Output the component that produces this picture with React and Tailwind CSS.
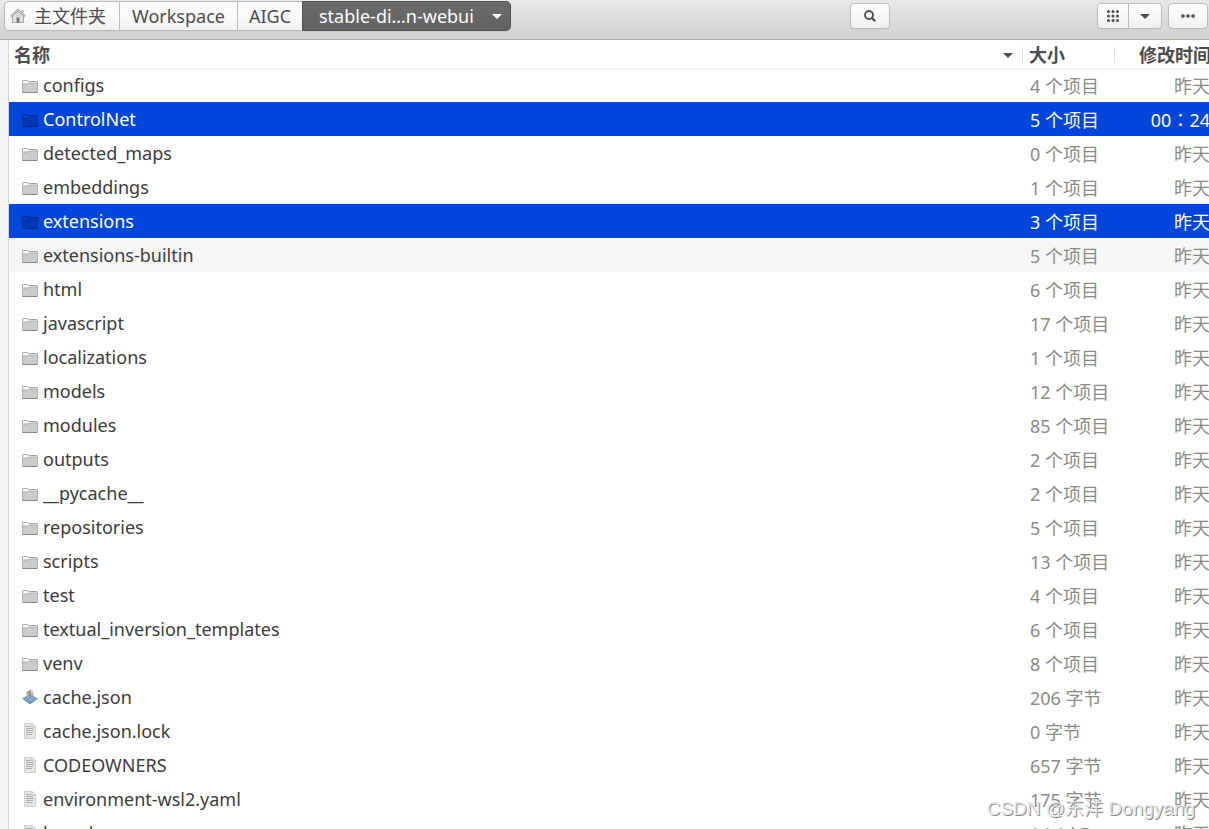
import React from "react";

const files = [
  { name: "configs", size: "4 个项目" },
  { name: "ControlNet", size: "5 个项目", date: "00：24", selected: true },
  { name: "detected_maps", size: "0 个项目" },
  { name: "embeddings", size: "1 个项目" },
  { name: "extensions", size: "3 个项目", selected: true },
  { name: "extensions-builtin", size: "5 个项目", hovered: true },
  { name: "html", size: "6 个项目" },
  { name: "javascript", size: "17 个项目" },
  { name: "localizations", size: "1 个项目" },
  { name: "models", size: "12 个项目" },
  { name: "modules", size: "85 个项目" },
  { name: "outputs", size: "2 个项目" },
  { name: "__pycache__", size: "2 个项目" },
  { name: "repositories", size: "5 个项目" },
  { name: "scripts", size: "13 个项目" },
  { name: "test", size: "4 个项目" },
  { name: "textual_inversion_templates", size: "6 个项目" },
  { name: "venv", size: "8 个项目" },
  { name: "cache.json", size: "206 字节", type: "json" },
  { name: "cache.json.lock", size: "0 字节", type: "text" },
  { name: "CODEOWNERS", size: "657 字节", type: "text" },
  { name: "environment-wsl2.yaml", size: "175 字节", type: "text" },
  { name: "launch.py", size: "14.1 kB", type: "text" },
];

function HomeIcon() {
  return (
    <svg className="w-4 h-4 shrink-0" viewBox="0 0 16 16" fill="none">
      <path d="M2.5 8v6.500h11V8L8 3z" fill="#e2e2e2" stroke="#a8a8a8" />
      <path d="M11.500 2h2v4l-2-2z" fill="#b4b4b4" />
      <path d="M1 8.400L8 1.800l7 6.600" stroke="#9c9c9c" strokeWidth="2" />
      <path d="M1.400 8.200L8 2l6.600 6.200" stroke="#dedede" strokeWidth=".8" />
      <path d="M6.500 9.500h3v5h-3z" fill="#777" />
      <circle cx="8" cy="6.500" r="1.300" fill="#f5f5f5" stroke="#aaa" strokeWidth=".6" />
    </svg>
  );
}

function FolderIcon({ selected }) {
  return (
    <svg className="w-4 h-4 shrink-0" viewBox="0 0 16 16" fill="none">
      <path d="M.5 14V4q0-.5.5-.5h4.500l1.500 1h8q.5 0 .5.5v9z" fill={selected ? "#0043d2" : "#fafafa"} stroke={selected ? "#002a8c" : "#a9a9a9"} />
      <path d="M1 7.500q0-.5.5-.5h4.500l1-1h8v9H1z" fill={selected ? "#0037b4" : "#cbcbcb"} />
      <path d="M.5 15V7.500q0-.5.5-.5h5l1-1h8.500v9" stroke={selected ? "#002f9c" : "#b0b0b0"} />
      <path d="M.5 15.500h15" stroke={selected ? "#00277f" : "#868686"} />
    </svg>
  );
}

function JsonIcon() {
  return (
    <svg className="w-4 h-4 shrink-0" viewBox="0 0 16 16" fill="none">
      <path d="M0 9.500L8 5l8 4.500L8 15z" fill="#76a5d2" />
      <path d="M0 9.500L8 14l8-4.500L8 15.200z" fill="#4c7fb0" />
      <path d="M4 4L7 2l1-2 2 1 1 3 1 3-3 4-2 1 .500-4L5 7z" fill="#b3b0b1" />
      <path d="M5 3.500l3-1.500 1 2-2 2 2 1-1 3" stroke="#7d7476" />
      <path d="M8 .5l2 1.500-1 2.500z" fill="#dedede" />
    </svg>
  );
}

function TextIcon() {
  return (
    <svg className="w-4 h-4 shrink-0" viewBox="0 0 16 16" fill="none">
      <path d="M2.500.5H10L13.500 4v11.500h-11z" fill="#e6e6e6" stroke="#d0d0d0" />
      <path d="M10 .5V4h3.500z" fill="#fff" stroke="#c0c0c0" />
      <path d="M4 3.500h5M4 5.500h7M4 7.500h8M4 9.500h7M4 11.500h6" stroke="#acacac" />
    </svg>
  );
}

function FileIcon({ file }) {
  if (file.type === "json") return <JsonIcon />;
  if (file.type === "text") return <TextIcon />;
  return <FolderIcon selected={file.selected} />;
}

function Caret() {
  return (
    <svg className="w-[10px] h-[5px] shrink-0" viewBox="0 0 10 5" fill="currentColor">
      <path d="M0 0h10L5.500 4.600q-.5.4-1 0z" />
    </svg>
  );
}

function Toolbar() {
  const button = "flex items-center justify-center h-[26px] rounded-[4px] border border-[#bcbcbc] bg-linear-to-b from-white to-[#f0f0f0] shadow-xs";

  return (
    <header className="flex items-start h-10 shrink-0 border-b border-[#a9a9a9] bg-linear-to-b from-[#e9e9e9] to-[#d2d2d2] pl-1 text-[#4c4c4c]">
      <nav className="flex h-[30px] mt-px rounded-[5px] border border-[#bcbcbc] bg-linear-to-b from-white to-[#f2f2f2] shadow-xs">
        <button className="flex items-center gap-2 w-[115px] pl-[5px] border-r border-[#bcbcbc]">
          <HomeIcon />
          主文件夹
        </button>
        <button className="w-[118px] border-r border-[#bcbcbc]">Workspace</button>
        <button className="w-16">AIGC</button>
        <button className="flex items-center justify-between w-[209px] -my-px -mr-px pl-4 pr-2 rounded-r-[5px] border border-[#505050] bg-linear-to-b from-[#6b6b6b] to-[#616161] text-white">
          stable-di…n-webui
          <Caret />
        </button>
      </nav>

      <div className="flex flex-1 justify-end pt-[3px] pr-px">
        <button aria-label="搜索" className={`${button} w-10 mr-[207px]`}>
          <svg className="w-3 h-3" viewBox="0 0 12 12" fill="none" stroke="currentColor">
            <circle cx="5" cy="5" r="4" strokeWidth="1.800" />
            <path d="M7.800 7.800l3.400 3.400" strokeWidth="2.200" />
          </svg>
        </button>
        <div className={`${button} w-[65px] mr-[6px]`}>
          <button aria-label="视图" className="flex flex-1 h-full items-center justify-center border-r border-[#bcbcbc]">
            <svg className="w-3 h-3" viewBox="0 0 12 12" fill="currentColor">
              {[1.5, 6, 10.5].map((y) =>
                [1.5, 6, 10.5].map((x) => <circle key={`${x}-${y}`} cx={x} cy={y} r="1.500" />)
              )}
            </svg>
          </button>
          <button aria-label="视图选项" className="flex w-8 h-full items-center justify-center">
            <Caret />
          </button>
        </div>
        <button aria-label="菜单" className={`${button} w-10`}>
          <svg className="w-[14px] h-1" viewBox="0 0 14 4" fill="currentColor">
            <circle cx="2" cy="2" r="1.800" />
            <circle cx="7" cy="2" r="1.800" />
            <circle cx="12" cy="2" r="1.800" />
          </svg>
        </button>
      </div>
    </header>
  );
}

function FileRow({ file }) {
  let color = "text-[#3c3c3c]";
  let muted = "text-[#8b8b86]";
  if (file.selected) {
    color = "bg-[#0046dc] text-white";
    muted = "text-white";
  } else if (file.hovered) {
    color = "bg-[#f6f6f6] text-[#3c3c3c]";
  }

  return (
    <tr className={`h-[34px] ${color}`}>
      <td className="pl-[13px]">
        <div className="flex items-center gap-[5px]">
          <FileIcon file={file} />
          {file.name}
        </div>
      </td>
      <td className={`pl-2 pt-[2px] ${muted}`}>{file.size}</td>
      <td className={`pt-[2px] pr-px text-right font-['Noto_Sans','Noto_Sans_CJK_TC',sans-serif] ${muted}`}>
        {file.date || "昨天"}
      </td>
    </tr>
  );
}

export default function App() {
  return (
    <div className="relative flex flex-col h-screen overflow-hidden bg-white text-[18px] leading-6 font-['Noto_Sans','Noto_Sans_CJK_SC',sans-serif]">
      <Toolbar />

      <div className="flex flex-1 min-h-0">
        {/* Collapsed sidebar edge */}
        <aside className="w-[9px] shrink-0 border-r border-[#d6d6d6] bg-[#f5f5f5]" />

        <main className="flex-1 min-w-0 overflow-hidden">
          {/* The date column runs slightly past the window edge */}
          <table className="w-[calc(100%+2px)] table-fixed border-separate border-spacing-0 whitespace-nowrap">
            <thead className="shadow-[0_1px_0_#efefef] text-[#4c4c4c]">
              <tr className="h-7 text-left">
                <th className="pl-[5px] pt-[2px]">
                  <div className="flex items-center justify-between pr-[9px]">
                    名称
                    <Caret />
                  </div>
                </th>
                <th className="w-[93px] pt-[2px]">
                  <div className="h-4 border-l border-r border-[#dedede] pl-[6px] leading-4">大小</div>
                </th>
                <th className="w-[96px] pt-[2px] text-right">修改时间</th>
              </tr>
            </thead>
            <tbody>
              {files.map((file) => (
                <FileRow key={file.name} file={file} />
              ))}
            </tbody>
          </table>
        </main>
      </div>

      <p className="absolute right-[14px] bottom-2 text-[19px] text-[#e8e8e8] font-['Liberation_Sans','Noto_Sans_CJK_SC',sans-serif] [text-shadow:1px_1px_0_#8a8a8a]">
        CSDN @东洋 Dongyang
      </p>
    </div>
  );
}
